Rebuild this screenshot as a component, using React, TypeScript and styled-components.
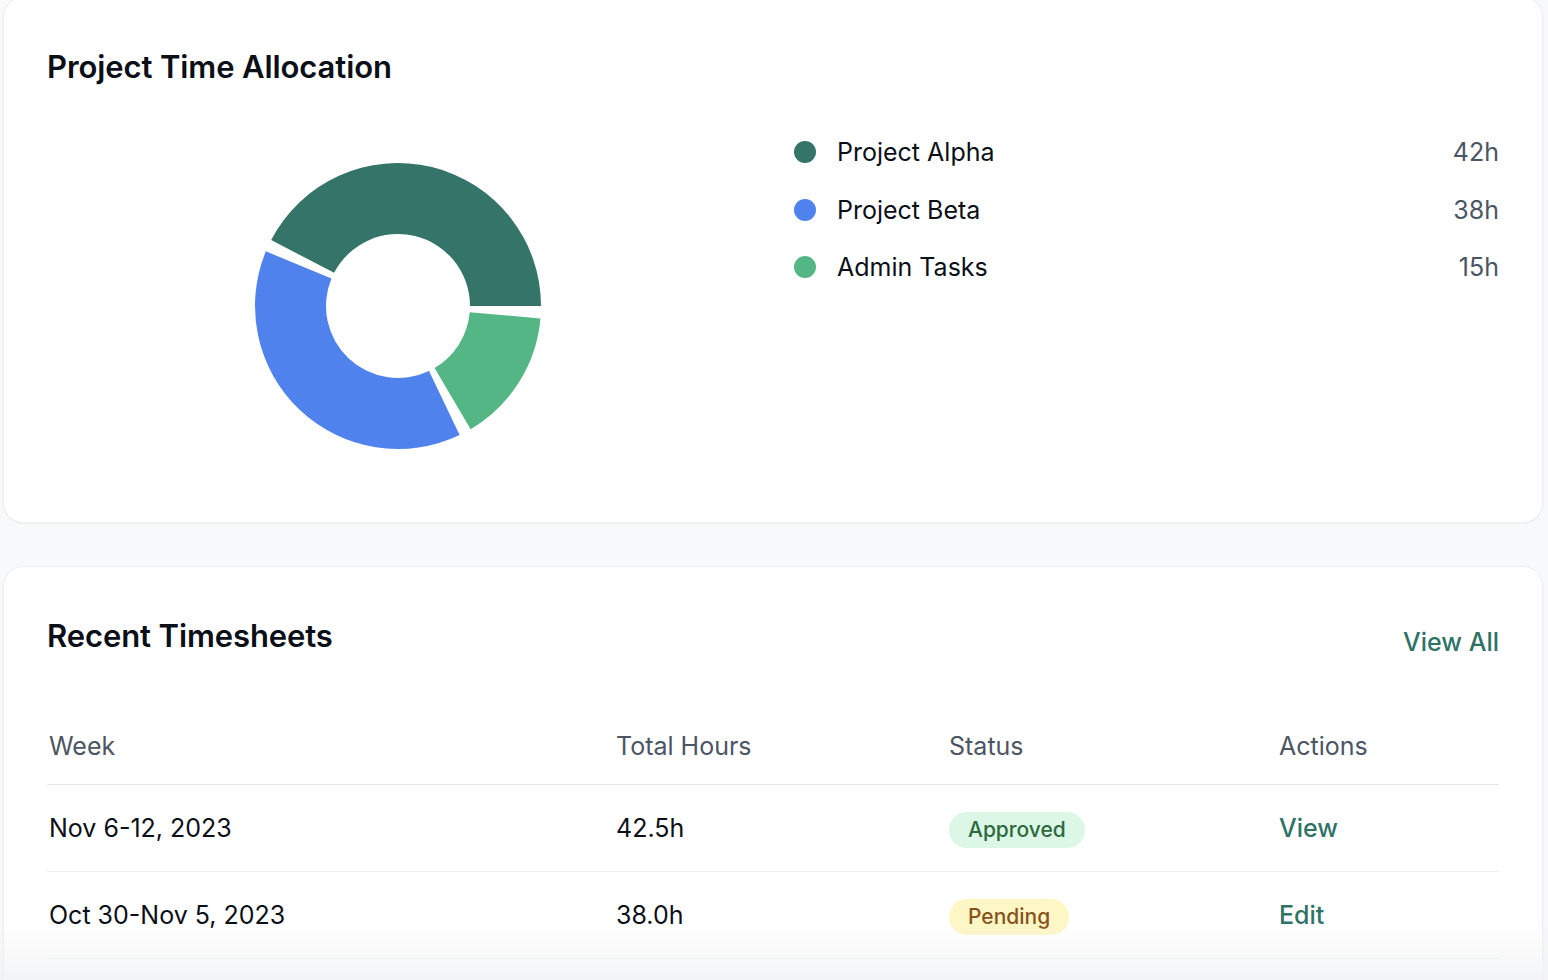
import React from "react";
import styled, { createGlobalStyle } from "styled-components";

const Global = createGlobalStyle`
  html, body { margin: 0; padding: 0; background: #f8f9fb; }
  body { font-family: Inter, "Noto Sans", Arial, sans-serif; color: #111827; -webkit-font-smoothing: antialiased; }
  * { box-sizing: border-box; }
`;

const Page = styled.div`
  display: flex;
  flex-direction: column;
  gap: 43px;
  padding: 0 5px 0 3px;
  margin-top: -3px;
  min-height: 983px;
`;

const Card = styled.section`
  background: #ffffff;
  border: 1px solid #eceef1;
  border-radius: 20px;
  box-shadow: 0 1px 2px rgba(16, 24, 40, 0.04);
  padding: 0 43px 44px;
`;

const Title = styled.h2`
  margin: 0;
  font-size: 31px;
  line-height: 50px;
  padding-top: 44px;
  font-weight: 600;
  color: #0b0f17;
  letter-spacing: -0.1px;
`;

const AllocGrid = styled.div`
  display: grid;
  grid-template-columns: 1fr 1fr;
  gap: 42px;
  margin-top: 42px;
`;

const ChartBox = styled.div`
  height: 344px;
  display: flex;
  align-items: center;
  justify-content: center;
  padding-right: 4px;
`;

const Legend = styled.ul`
  list-style: none;
  margin: 0;
  padding: 0;
  display: flex;
  flex-direction: column;
  gap: 21.5px;
`;

const LegendRow = styled.li`
  display: flex;
  align-items: center;
  justify-content: space-between;
  height: 36px;
`;

const LegendLabel = styled.span`
  display: flex;
  align-items: center;
  gap: 21px;
  font-size: 25px;
  color: #0b0f17;
`;

const Dot = styled.span<{ $c: string }>`
  width: 22px;
  height: 22px;
  border-radius: 50%;
  background: ${(p) => p.$c};
`;

const LegendValue = styled.span`
  font-size: 25px;
  color: #4b5563;
`;

const HeadRow = styled.div`
  display: flex;
  align-items: flex-end;
  justify-content: space-between;
`;

const ViewAll = styled.a`
  font-size: 25px;
  font-weight: 500;
  color: #2f7367;
  line-height: 36px;
  margin-bottom: 1px;
  cursor: pointer;
`;

const Table = styled.table`
  width: 100%;
  border-collapse: collapse;
  table-layout: fixed;
  margin-top: 41px;
`;

const Th = styled.th`
  text-align: left;
  font-weight: 400;
  font-size: 25px;
  line-height: 36px;
  color: #4b5563;
  padding: 26px 0 20px 2px;
  border-bottom: 1px solid #e5e7eb;
`;

const Td = styled.td`
  font-size: 25px;
  line-height: 36px;
  height: 87px;
  color: #0b0f17;
  padding: 0 0 0 2px;
  border-bottom: 1px solid #eceef1;
  vertical-align: middle;
`;

const Badge = styled.span<{ $bg: string; $fg: string }>`
  display: inline-block;
  vertical-align: middle;
  padding: 0 19px;
  height: 36px;
  line-height: 36px;
  border-radius: 18px;
  font-size: 21px;
  font-weight: 500;
  background: ${(p) => p.$bg};
  color: ${(p) => p.$fg};
  transform: translateY(1px);
`;

const ActionLink = styled.a`
  font-size: 25px;
  font-weight: 500;
  color: #2f7367;
  cursor: pointer;
`;

const BottomFade = styled.div`
  position: fixed;
  left: 0;
  right: 0;
  bottom: 0;
  height: 55px;
  pointer-events: none;
  background: linear-gradient(to bottom, rgba(243, 244, 246, 0), rgba(240, 241, 243, 0.8));
`;

const data = [
  { name: "Project Alpha", value: 42, color: "#357468" },
  { name: "Project Beta", value: 38, color: "#4f82ec" },
  { name: "Admin Tasks", value: 15, color: "#54b685" },
];

function arcPath(cx: number, cy: number, r0: number, r1: number, a0: number, a1: number) {
  const p = (r: number, d: number) => {
    const rad = (d * Math.PI) / 180;
    return `${(cx + r * Math.cos(rad)).toFixed(2)} ${(cy - r * Math.sin(rad)).toFixed(2)}`;
  };
  const large = a1 - a0 > 180 ? 1 : 0;
  return `M ${p(r1, a0)} A ${r1} ${r1} 0 ${large} 0 ${p(r1, a1)} L ${p(r0, a1)} A ${r0} ${r0} 0 ${large} 1 ${p(r0, a0)} Z`;
}

function Donut() {
  const total = data.reduce((s, d) => s + d.value, 0);
  const pad = 5;
  const avail = 360 - pad * data.length;
  let a = 0;
  const segs = data.map((d) => {
    const sweep = (d.value / total) * avail;
    const seg = { ...d, a0: a, a1: a + sweep };
    a += sweep + pad;
    return seg;
  });
  return (
    <svg width="290" height="290" viewBox="0 0 290 290">
      {segs.map((s) => (
        <path key={s.name} d={arcPath(145, 145, 72, 143, s.a0, s.a1)} fill={s.color} />
      ))}
    </svg>
  );
}

const rows = [
  { week: "Nov 6-12, 2023", hours: "42.5h", status: "Approved", action: "View" },
  { week: "Oct 30-Nov 5, 2023", hours: "38.0h", status: "Pending", action: "Edit" },
];

export default function App() {
  return (
    <>
      <Global />
      <Page>
        <Card>
          <Title>Project Time Allocation</Title>
          <AllocGrid>
            <ChartBox>
              <Donut />
            </ChartBox>
            <Legend>
              {data.map((d) => (
                <LegendRow key={d.name}>
                  <LegendLabel>
                    <Dot $c={d.color} />
                    {d.name}
                  </LegendLabel>
                  <LegendValue>{d.value}h</LegendValue>
                </LegendRow>
              ))}
            </Legend>
          </AllocGrid>
        </Card>
        <Card>
          <HeadRow>
            <Title>Recent Timesheets</Title>
            <ViewAll>View All</ViewAll>
          </HeadRow>
          <Table>
            <colgroup>
              <col style={{ width: 567 }} />
              <col style={{ width: 333 }} />
              <col style={{ width: 330 }} />
              <col />
            </colgroup>
            <thead>
              <tr>
                <Th>Week</Th>
                <Th>Total Hours</Th>
                <Th>Status</Th>
                <Th>Actions</Th>
              </tr>
            </thead>
            <tbody>
              {rows.map((r) => (
                <tr key={r.week}>
                  <Td>{r.week}</Td>
                  <Td>{r.hours}</Td>
                  <Td>
                    {r.status === "Approved" ? (
                      <Badge $bg="#dcf7e6" $fg="#2c6a3e">Approved</Badge>
                    ) : (
                      <Badge $bg="#fdf7c6" $fg="#87531a">Pending</Badge>
                    )}
                  </Td>
                  <Td>
                    <ActionLink>{r.action}</ActionLink>
                  </Td>
                </tr>
              ))}
            </tbody>
          </Table>
        </Card>
      </Page>
      <BottomFade />
    </>
  );
}
